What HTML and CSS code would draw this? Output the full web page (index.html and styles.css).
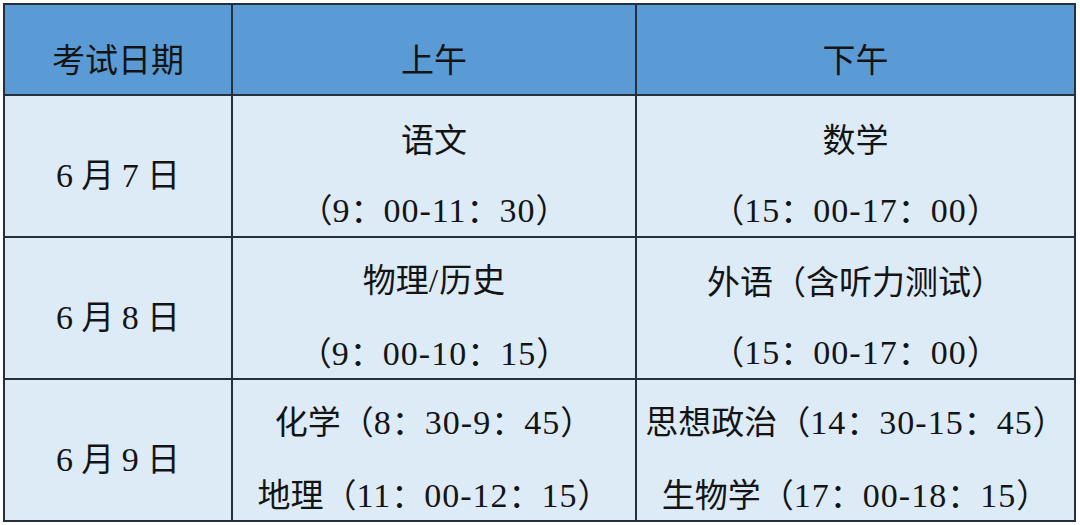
FILE: index.html
```html
<!DOCTYPE html>
<html>
<head>
<meta charset="utf-8">
<title>考试日期</title>
<link rel="stylesheet" href="styles.css">
</head>
<body>
<div class="page">
  <div class="table">
    <div class="cell head"><div class="line">考试日期</div></div>
    <div class="cell head"><div class="line">上午</div></div>
    <div class="cell head"><div class="line">下午</div></div>

    <div class="cell"><div class="line"><span class="n">6</span> 月 <span class="n">7</span> 日</div></div>
    <div class="cell"><div class="line">语文</div><div class="line">（<span class="n">9</span>：<span class="n">00-11</span>：<span class="n">30</span>）</div></div>
    <div class="cell"><div class="line">数学</div><div class="line">（<span class="n">15</span>：<span class="n">00-17</span>：<span class="n">00</span>）</div></div>

    <div class="cell"><div class="line"><span class="n">6</span> 月 <span class="n">8</span> 日</div></div>
    <div class="cell"><div class="line">物理<span class="n">/</span>历史</div><div class="line">（<span class="n">9</span>：<span class="n">00-10</span>：<span class="n">15</span>）</div></div>
    <div class="cell"><div class="line">外语（含听力测试）</div><div class="line">（<span class="n">15</span>：<span class="n">00-17</span>：<span class="n">00</span>）</div></div>

    <div class="cell"><div class="line"><span class="n">6</span> 月 <span class="n">9</span> 日</div></div>
    <div class="cell"><div class="line">化学（<span class="n">8</span>：<span class="n">30-9</span>：<span class="n">45</span>）</div><div class="line">地理（<span class="n">11</span>：<span class="n">00-12</span>：<span class="n">15</span>）</div></div>
    <div class="cell"><div class="line">思想政治（<span class="n">14</span>：<span class="n">30-15</span>：<span class="n">45</span>）</div><div class="line">生物学（<span class="n">17</span>：<span class="n">00-18</span>：<span class="n">15</span>）</div></div>
  </div>
</div>
</body>
</html>
```
FILE: styles.css
```css
html, body {
  margin: 0;
  padding: 0;
  background: #ffffff;
}
.page {
  width: 1080px;
  height: 525px;
  padding: 3px 0 0 3px;
  box-sizing: border-box;
}
.table {
  width: 1073px;
  height: 519px;
  box-sizing: border-box;
  padding: 2px;
  background: #26303b;
  display: grid;
  grid-template-columns: 226px 402px 1fr;
  grid-template-rows: 89px 140px 140px 1fr;
  gap: 2px;
  font-family: "Noto Sans CJK SC", sans-serif;
  font-size: 33px;
  font-weight: 400;
  color: #141414;
}
.n {
  font-family: "Liberation Serif", "Times New Roman", serif;
  font-size: 34px;
  letter-spacing: 1px;
}
.cell {
  background: #ddebf7;
  display: flex;
  flex-direction: column;
  align-items: center;
  justify-content: center;
  gap: 30px;
  padding-top: 16px;
  box-sizing: border-box;
}
.head {
  background: #5b9bd5;
}
.line {
  line-height: 40px;
  white-space: pre;
}
```
